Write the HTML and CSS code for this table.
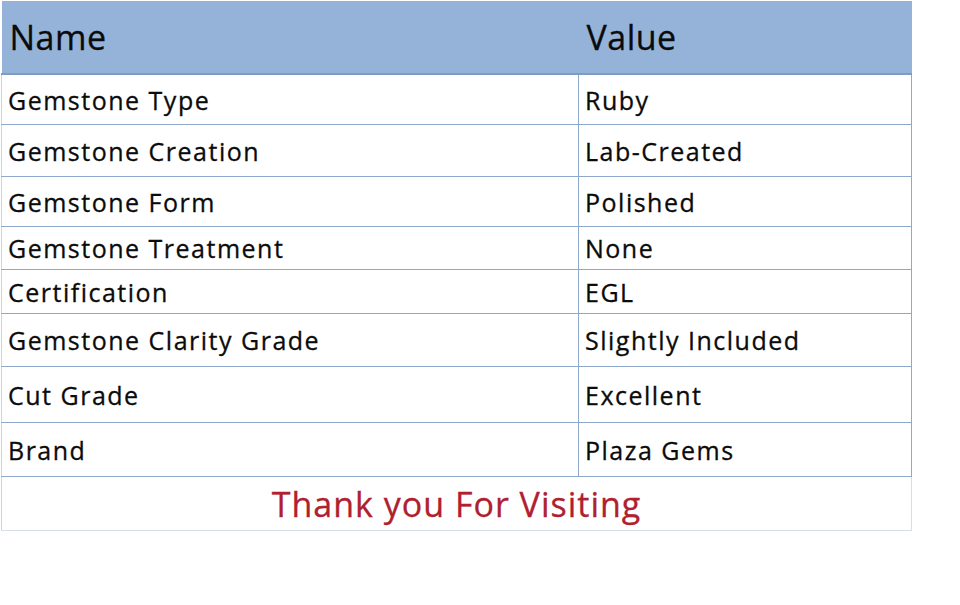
FILE: index.html
```html
<!DOCTYPE html>
<html>
<head>
<meta charset="utf-8">
<link rel="stylesheet" href="styles.css">
</head>
<body>
<div class="page">
  <table class="specs">
    <thead>
      <tr class="head">
        <th class="c1">Name</th>
        <th class="c2">Value</th>
      </tr>
    </thead>
    <tbody>
      <tr class="r1"><td>Gemstone Type</td><td>Ruby</td></tr>
      <tr class="r2"><td>Gemstone Creation</td><td>Lab-Created</td></tr>
      <tr class="r3"><td>Gemstone Form</td><td>Polished</td></tr>
      <tr class="r4"><td>Gemstone Treatment</td><td>None</td></tr>
      <tr class="r5"><td>Certification</td><td>EGL</td></tr>
      <tr class="r6"><td>Gemstone Clarity Grade</td><td>Slightly Included</td></tr>
      <tr class="r7"><td>Cut Grade</td><td>Excellent</td></tr>
      <tr class="r8"><td>Brand</td><td>Plaza Gems</td></tr>
      <tr class="foot"><td colspan="2">Thank you For Visiting</td></tr>
    </tbody>
  </table>
</div>
</body>
</html>
```
FILE: styles.css
```css
html, body {
  margin: 0;
  padding: 0;
  background: #ffffff;
}
.page {
  padding: 1px 0 0 1px;
}
.specs {
  border-collapse: collapse;
  width: 911px;
  font-family: "Open Sans", "Liberation Sans", sans-serif;
  color: #0b0b0b;
  table-layout: fixed;
}
.specs th, .specs td {
  padding: 0 0 0 6px;
  text-align: left;
  vertical-align: middle;
  border: 1px solid #8fa9cd;
  white-space: nowrap;
  -webkit-text-stroke: 0.3px currentColor;
}
.specs td {
  font-size: 25px;
  letter-spacing: 1.5px;
}
.specs th {
  font-size: 34px;
  letter-spacing: 0.5px;
  font-weight: normal;
  background: #95b3d8;
  height: 72px;
  border-top: none;
  border-left: none;
  border-right: none;
  border-bottom: 2px solid #7f9bc4;
  padding-left: 8px;
}
.c1 { width: 569px; }
.r1 td { height: 49px; }
.r2 td { height: 51px; }
.r3 td { height: 49px; }
.r4 td { height: 42px; }
.r5 td { height: 43px; }
.r6 td { height: 52px; }
.r7 td { height: 55px; }
.r8 td { height: 53px; }
.specs tr td:first-child { border-left-color: #c9d4e4; }
.foot td {
  height: 53px;
  text-align: center;
  padding: 0;
  color: #b0202e;
  font-size: 34px;
  letter-spacing: 1px;
  border: 1px solid #d9dee5;
}
```
